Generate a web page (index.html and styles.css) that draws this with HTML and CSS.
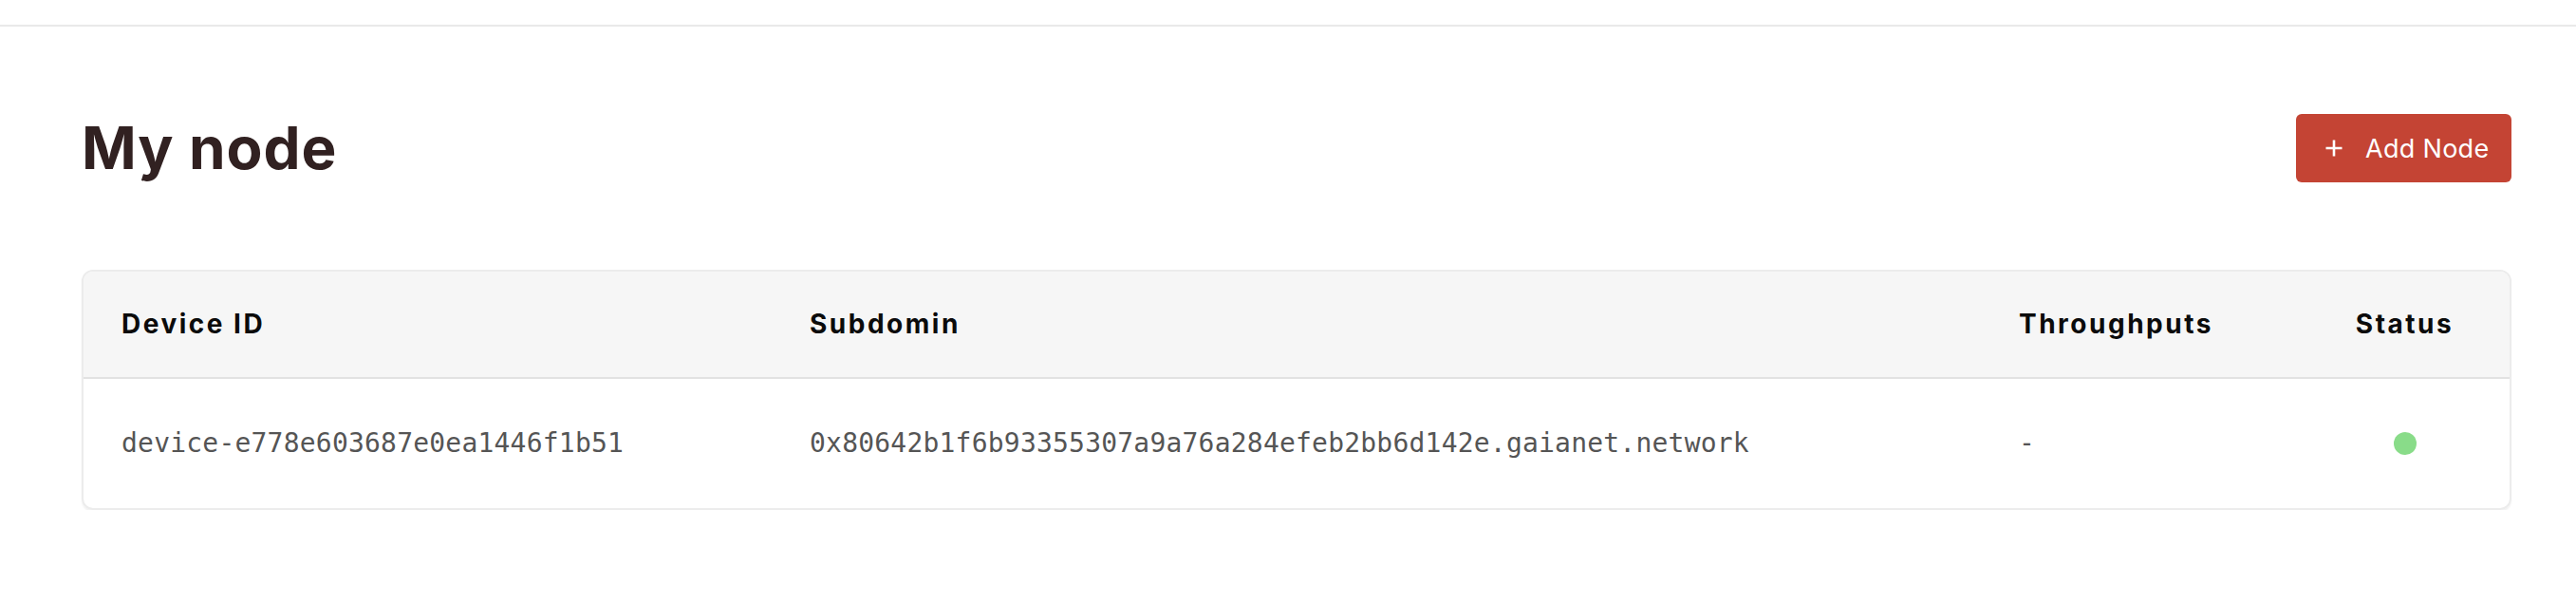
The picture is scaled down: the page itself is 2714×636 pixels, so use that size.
FILE: index.html
```html
<!DOCTYPE html>
<html lang="en">
<head>
<meta charset="utf-8">
<title>My node</title>
<link rel="stylesheet" href="styles.css">
</head>
<body>
<header class="topbar"></header>
<main class="page">
  <div class="title-row">
    <h1 class="title">My node</h1>
    <button class="add-btn" type="button">
      <svg class="plus" width="20" height="20" viewBox="0 0 20 20" aria-hidden="true">
        <path d="M10 1.5V18.5M1.5 10H18.5" stroke="#ffffff" stroke-width="2.6" fill="none"/>
      </svg>
      <span>Add Node</span>
    </button>
  </div>
  <section class="card">
    <div class="grid head">
      <div class="cell">Device ID</div>
      <div class="cell">Subdomin</div>
      <div class="cell">Throughputs</div>
      <div class="cell center">Status</div>
    </div>
    <div class="grid row">
      <div class="cell mono">device-e778e603687e0ea1446f1b51</div>
      <div class="cell mono">0x80642b1f6b93355307a9a76a284efeb2bb6d142e.gaianet.network</div>
      <div class="cell mono">-</div>
      <div class="cell center"><span class="dot"></span></div>
    </div>
  </section>
</main>
</body>
</html>
```
FILE: styles.css
```css
html, body {
  margin: 0;
  padding: 0;
  background: #ffffff;
}
body {
  font-family: Inter, "Noto Sans", "Liberation Sans", sans-serif;
  color: #111;
}
.topbar {
  height: 26px;
  border-bottom: 2px solid #e9e9e9;
}
.page {
  width: 2560px;
  padding: 92px 0 0 86px;
}
.title-row {
  display: flex;
  align-items: center;
  justify-content: space-between;
  height: 72px;
}
.title {
  margin: 0;
  font-size: 62px;
  line-height: 62px;
  font-weight: 700;
  letter-spacing: 0.9px;
  color: #312121;
}
.add-btn {
  display: flex;
  align-items: center;
  gap: 23px;
  box-sizing: border-box;
  width: 227px;
  height: 72px;
  padding: 0 0 0 30px;
  border: none;
  border-radius: 6px;
  background: #c44434;
  color: #ffffff;
  font-family: Inter, "Noto Sans", sans-serif;
  font-size: 27px;
  font-weight: 400;
  letter-spacing: 0.3px;
}
.plus {
  display: block;
  flex: none;
}
.card {
  box-sizing: border-box;
  width: 2560px;
  margin-top: 92px;
  border: 2px solid #ececec;
  border-radius: 12px;
  overflow: hidden;
  box-shadow: 0 2px 2px rgba(0, 0, 0, 0.06);
}
.grid {
  display: grid;
  grid-template-columns: 725px 1274px 336px 221px;
  align-items: center;
}
.head {
  background: #f6f6f6;
  border-bottom: 2px solid #e2e2e2;
  height: 111px;
}
.head .cell {
  font-size: 28px;
  line-height: 33px;
  font-weight: 700;
  letter-spacing: 2.5px;
  color: #0b0b0b;
}
.row {
  height: 136px;
}
.cell {
  padding: 0 40px;
  white-space: nowrap;
}
.center {
  text-align: center;
  padding: 0;
}
.mono {
  font-family: "DejaVu Sans Mono", "Liberation Mono", monospace;
  font-size: 28px;
  line-height: 34px;
  letter-spacing: 0.21px;
  color: #555555;
}
.dot {
  display: inline-block;
  width: 24px;
  height: 24px;
  border-radius: 50%;
  background: #89dc89;
  vertical-align: middle;
}
```
